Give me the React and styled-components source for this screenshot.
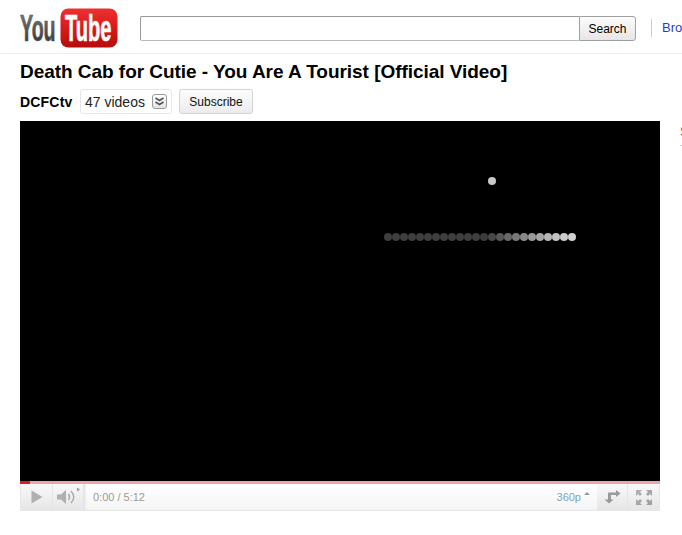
import React from 'react';
import styled, { createGlobalStyle } from 'styled-components';

const GlobalStyle = createGlobalStyle`
  html, body {
    margin: 0;
    padding: 0;
    background: #fff;
    overflow: hidden;
  }
  body {
    font-family: "Liberation Sans", Arial, sans-serif;
    color: #000;
  }
`;

const dotColors = [
  '#3d3d3d', '#3d3d3d', '#3d3d3d', '#3d3d3d', '#3d3d3d', '#3d3d3d', '#3d3d3d',
  '#3d3d3d', '#3d3d3d', '#3d3d3d', '#3d3d3d', '#3d3d3d', '#3b3b3b', '#484848',
  '#585858', '#686868', '#787878', '#888888', '#989898', '#a6a6a6', '#b6b6b6',
  '#c2c2c2', '#cacaca', '#d0d0d0',
];

function Logo() {
  return (
    <LogoSvg width="98" height="41" viewBox="0 0 98 41">
      <defs>
        <linearGradient id="you" x1="0" y1="0" x2="0" y2="1">
          <stop offset="0" stopColor="#808080" />
          <stop offset="1" stopColor="#2e2e2e" />
        </linearGradient>
        <linearGradient id="red" x1="0" y1="0" x2="0" y2="1">
          <stop offset="0" stopColor="#ee3030" />
          <stop offset="0.55" stopColor="#d81818" />
          <stop offset="1" stopColor="#b20e0e" />
        </linearGradient>
      </defs>
      <rect x="40.5" y="0.5" width="57" height="39" rx="8" fill="url(#red)" />
      <LogoText transform="translate(0 33) scale(0.545 1)" fill="url(#you)" stroke="#555">You</LogoText>
      <LogoText transform="translate(45 32.5) scale(0.558 1)" fill="#fff" stroke="#fff">Tube</LogoText>
    </LogoSvg>
  );
}

function PlayIcon() {
  return (
    <svg width="12" height="14" viewBox="0 0 12 14">
      <path d="M0.5 0.5 L11.5 7 L0.5 13.5 Z" fill="#b0b0b0" />
    </svg>
  );
}

function VolumeIcon() {
  return (
    <svg width="26" height="20" viewBox="0 0 26 20">
      <path d="M2 7.5 H6 L11 3 V17 L6 12.5 H2 Z" fill="#b0b0b0" />
      <path d="M13.5 7 Q15.5 10 13.5 13" fill="none" stroke="#aaa" strokeWidth="1.4" />
      <path d="M16 4 Q21.5 10 16 16" fill="none" stroke="#aaa" strokeWidth="1.4" />
      <path d="M22 0.5 L25 2.5 L22 4.5 Z" fill="#999" />
    </svg>
  );
}

function LoopIcon() {
  return (
    <svg width="17" height="14" viewBox="0 0 17 14">
      <path d="M5 3 H12 V0.5 L16.5 4 L12 7.5 V5.5 H7 V10 H9.5 L5 14 L0.5 10 H4 V3 Z" fill="#9a9a9a" transform="translate(0 -0.5)" />
    </svg>
  );
}

function FullscreenIcon() {
  return (
    <svg width="16" height="15" viewBox="0 0 16 15">
      <path d="M0 0 H6 L4 2 L6 4 L4 6 L2 4 L0 6 Z" fill="#b0b0b0" />
      <path d="M16 0 H10 L12 2 L10 4 L12 6 L14 4 L16 6 Z" fill="#a6a6a6" />
      <path d="M0 15 H6 L4 13 L6 11 L4 9 L2 11 L0 9 Z" fill="#a6a6a6" />
      <path d="M16 15 H10 L12 13 L10 11 L12 9 L14 11 L16 9 Z" fill="#a0a0a0" />
    </svg>
  );
}

function App() {
  return (
    <>
      <GlobalStyle />
      <Page>
        <Header>
          <Logo />
          <SearchForm>
            <SearchInput type="text" />
            <SearchButton type="button">Search</SearchButton>
          </SearchForm>
          <BrowseLink>Browse</BrowseLink>
        </Header>
        <Content>
          <Title>Death Cab for Cutie - You Are A Tourist [Official Video]</Title>
          <ChannelRow>
            <ChannelName>DCFCtv</ChannelName>
            <VideosBox>
              47 videos
              <Chevron>
                <svg width="11" height="11" viewBox="0 0 11 11">
                  <path d="M1.5 2 L5.5 4.5 L9.5 2 M1.5 6 L5.5 8.5 L9.5 6" fill="none" stroke="#555" strokeWidth="1.5" />
                </svg>
              </Chevron>
            </VideosBox>
            <SubscribeButton type="button">Subscribe</SubscribeButton>
          </ChannelRow>
          <PlayerRow>
            <Player>
              <Video>
                <svg width="640" height="360" viewBox="0 0 640 360">
                  <circle cx="472" cy="60" r="4" fill="#c8c8c8" />
                  {dotColors.map((color, i) => (
                    <circle key={i} cx={368 + i * 8} cy="116" r="4" fill={color} />
                  ))}
                </svg>
              </Video>
              <Progress>
                <Played />
              </Progress>
              <Controls>
                <ControlButton $width={32}><PlayIcon /></ControlButton>
                <ControlButton $width={31}><VolumeIcon /></ControlButton>
                <Timeline>
                  <Time>0:00 / 5:12</Time>
                  <Quality>360p<Caret /></Quality>
                </Timeline>
                <ControlButton $width={31}><LoopIcon /></ControlButton>
                <ControlButton $width={31}><FullscreenIcon /></ControlButton>
              </Controls>
            </Player>
            <Sidebar>Suggestions</Sidebar>
          </PlayerRow>
        </Content>
      </Page>
    </>
  );
}

export default App;

const Page = styled.div`
  width: 682px;
  height: 535px;
  overflow: hidden;
`;

const Header = styled.header`
  height: 53px;
  box-sizing: content-box;
  border-bottom: 1px solid #eee;
  padding-left: 20px;
  display: flex;
  align-items: flex-start;
  white-space: nowrap;
  overflow: hidden;
`;

const LogoSvg = styled.svg`
  margin-top: 8px;
  flex: none;
`;

const LogoText = styled.text`
  font-family: "Liberation Sans", Arial, sans-serif;
  font-weight: 700;
  font-size: 36px;
  stroke-width: 0.7px;
`;

const SearchForm = styled.form`
  display: flex;
  margin: 16px 0 0 22px;
  flex: none;
`;

const SearchInput = styled.input`
  width: 439px;
  height: 25px;
  box-sizing: border-box;
  margin: 0;
  padding: 0 4px;
  border: 1px solid #bbb;
  border-top-color: #999;
  border-left-color: #999;
  border-right: none;
  border-radius: 2px 0 0 2px;
  background: #fff;
  outline: none;
`;

const SearchButton = styled.button`
  width: 57px;
  height: 25px;
  box-sizing: border-box;
  margin: 0;
  padding: 0;
  border: 1px solid #a0a0a0;
  border-radius: 0 3px 3px 0;
  background: linear-gradient(#fcfcfc, #e6e6e6);
  font-family: "Liberation Sans", Arial, sans-serif;
  font-size: 12px;
  color: #000;
`;

const BrowseLink = styled.a`
  flex: none;
  margin: 19px 0 0 15px;
  padding-left: 10px;
  height: 18px;
  line-height: 18px;
  border-left: 1px solid #ccc;
  font-size: 13px;
  color: #1c3fd0;
`;

const Content = styled.main`
  padding-left: 20px;
`;

const Title = styled.h1`
  margin: 6px 0 0;
  height: 24px;
  line-height: 24px;
  font-size: 19px;
  letter-spacing: -0.04px;
  font-weight: 700;
  white-space: nowrap;
`;

const ChannelRow = styled.div`
  margin-top: 5px;
  height: 25px;
  display: flex;
  align-items: center;
`;

const ChannelName = styled.strong`
  width: 60px;
  font-size: 14px;
  letter-spacing: 0.2px;
  font-weight: 700;
`;

const VideosBox = styled.div`
  width: 92px;
  height: 25px;
  box-sizing: border-box;
  border: 1px solid #e6e6e6;
  border-radius: 3px;
  padding: 0 4px;
  display: flex;
  align-items: center;
  justify-content: space-between;
  font-size: 14px;
  color: #222;
`;

const Chevron = styled.span`
  width: 15px;
  height: 15px;
  box-sizing: border-box;
  border: 1px solid #999;
  border-radius: 3px;
  background: linear-gradient(#fff, #e4e4e4);
  display: flex;
  align-items: center;
  justify-content: center;
`;

const SubscribeButton = styled.button`
  margin: 0 0 0 7px;
  padding: 0;
  width: 74px;
  height: 25px;
  box-sizing: border-box;
  border: 1px solid #d4d4d4;
  border-radius: 3px;
  background: linear-gradient(#fdfdfd, #ececec);
  font-family: "Liberation Sans", Arial, sans-serif;
  font-size: 12px;
  color: #111;
`;

const PlayerRow = styled.div`
  margin-top: 7px;
  display: flex;
  align-items: flex-start;
`;

const Player = styled.section`
  width: 640px;
  flex: none;
`;

const Video = styled.div`
  height: 360px;
  background: #000;
  svg {
    display: block;
  }
`;

const Progress = styled.div`
  height: 3px;
  background: #e8a8a8;
`;

const Played = styled.div`
  width: 10px;
  height: 3px;
  background: #d81f1f;
`;

const Controls = styled.div`
  height: 27px;
  box-sizing: border-box;
  border: 1px solid #e6e6e6;
  border-top: none;
  display: flex;
  background: linear-gradient(#fff, #f2f2f2);
`;

const ControlButton = styled.div`
  width: ${(p) => p.$width}px;
  flex: none;
  box-sizing: border-box;
  border-right: 1px solid #e4e4e4;
  background: linear-gradient(#f8f8f8, #e6e6e6);
  display: flex;
  align-items: center;
  justify-content: center;
  &:last-child {
    border-right: none;
  }
`;

const Timeline = styled.div`
  flex: 1;
  padding: 0 7px 0 9px;
  display: flex;
  align-items: center;
  justify-content: space-between;
  background: linear-gradient(#fff, #f5f5f5);
  box-shadow: inset 3px 0 3px -2px #ddd;
  font-size: 11px;
`;

const Time = styled.span`
  color: #9a9a9a;
`;

const Quality = styled.span`
  color: #7ba3c8;
  display: flex;
  align-items: flex-start;
  gap: 3px;
`;

const Caret = styled.i`
  margin-top: 1px;
  width: 0;
  height: 0;
  border: 3px solid transparent;
  border-top: none;
  border-bottom: 3px solid #999;
`;

const Sidebar = styled.aside`
  margin: 3px 0 0 20px;
  padding-bottom: 6px;
  border-bottom: 1px solid #ccc;
  font-size: 13px;
  color: #8a6a3a;
  white-space: nowrap;
`;
